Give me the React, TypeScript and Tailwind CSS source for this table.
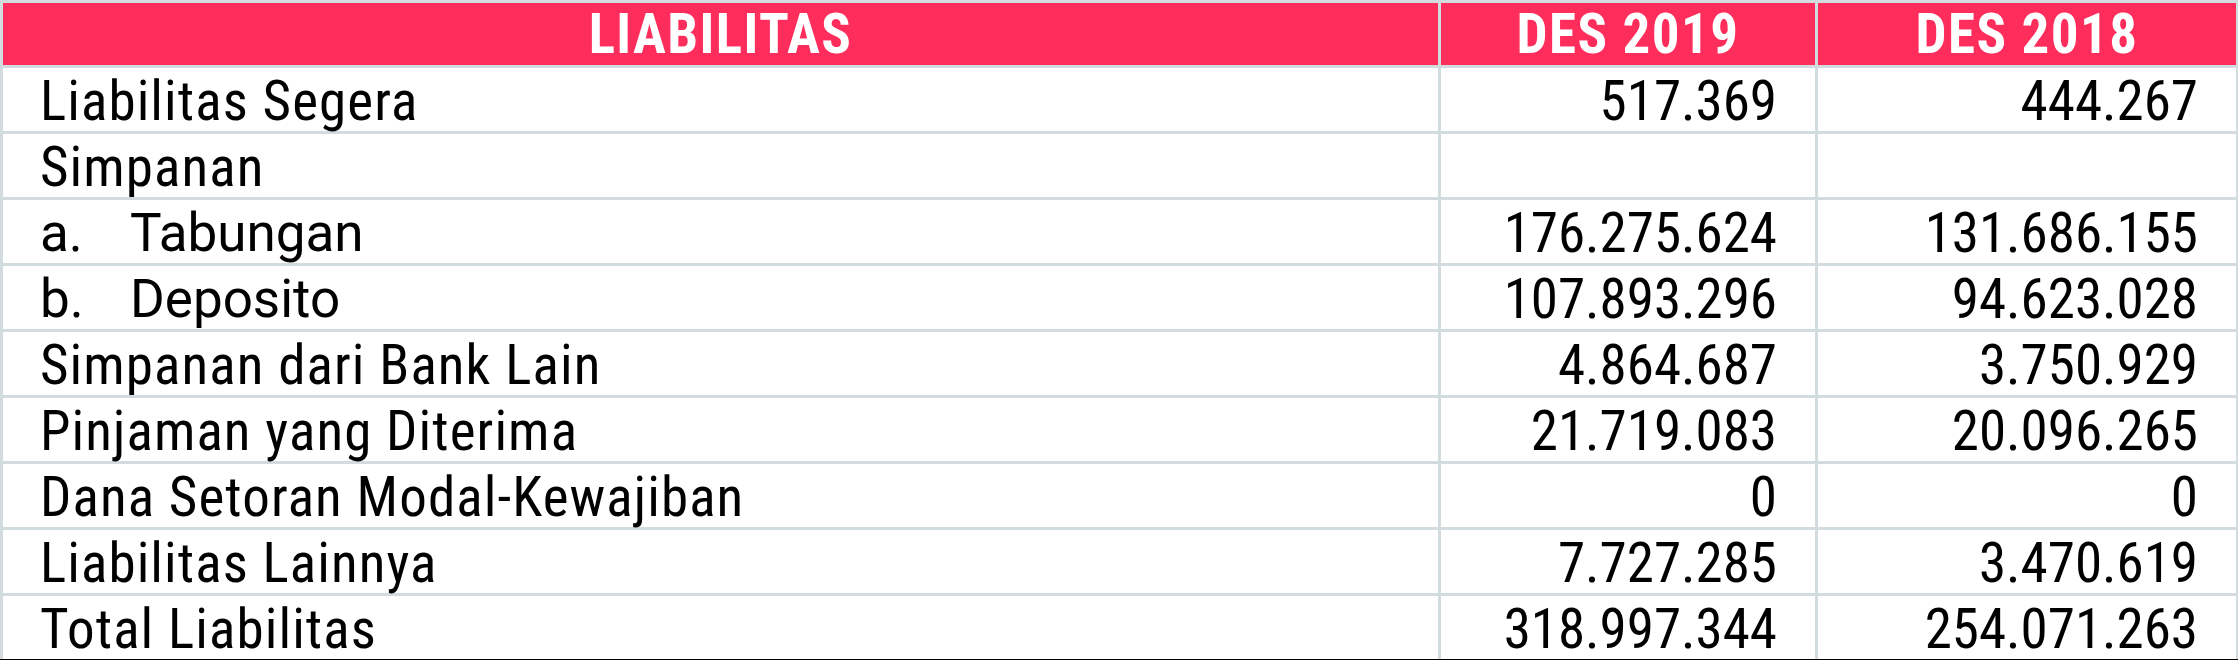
const rows: { label: string; sub?: string; a: string; b: string }[] = [
  { label: 'Liabilitas Segera', a: '517.369', b: '444.267' },
  { label: 'Simpanan', a: '', b: '' },
  { label: 'Tabungan', sub: 'a.', a: '176.275.624', b: '131.686.155' },
  { label: 'Deposito', sub: 'b.', a: '107.893.296', b: '94.623.028' },
  { label: 'Simpanan dari Bank Lain', a: '4.864.687', b: '3.750.929' },
  { label: 'Pinjaman yang Diterima', a: '21.719.083', b: '20.096.265' },
  { label: 'Dana Setoran Modal-Kewajiban', a: '0', b: '0' },
  { label: 'Liabilitas Lainnya', a: '7.727.285', b: '3.470.619' },
  { label: 'Total Liabilitas', a: '318.997.344', b: '254.071.263' },
]

export default function App() {
  return (
    <div className="w-[2238px] h-[660px] overflow-hidden bg-white font-['Roboto',sans-serif] text-black">
      <div className="grid grid-cols-[1435px_374px_418px] gap-[3px] bg-[#d2dbde] pt-[3px] pl-[3px] pr-[2px] border-b border-black">
        {/* Header */}
        {['LIABILITAS', 'DES 2019', 'DES 2018'].map((h) => (
          <div
            key={h}
            className="h-[62px] bg-[#ff2d5b] pt-[1px] text-center text-[55px] leading-[61px] font-bold tracking-[1.4px] text-white [font-stretch:condensed]"
          >
            {h}
          </div>
        ))}

        {rows.map((r) => (
          <div key={r.label} className="contents">
            <div className="h-[63px] bg-white pl-[37px] pt-[4px] text-[55px] leading-[59px]">
              {r.sub ? (
                <div className="flex text-[53px]">
                  <span className="w-[90px]">{r.sub}</span>
                  <span>{r.label}</span>
                </div>
              ) : (
                <span className="tracking-[1.1px] [font-stretch:condensed]">{r.label}</span>
              )}
            </div>
            <div className="h-[63px] bg-white pr-[38px] pt-[4px] text-right text-[55px] leading-[59px] [font-stretch:condensed]">
              {r.a}
            </div>
            <div className="h-[63px] bg-white pr-[38px] pt-[4px] text-right text-[55px] leading-[59px] [font-stretch:condensed]">
              {r.b}
            </div>
          </div>
        ))}
      </div>
    </div>
  )
}
